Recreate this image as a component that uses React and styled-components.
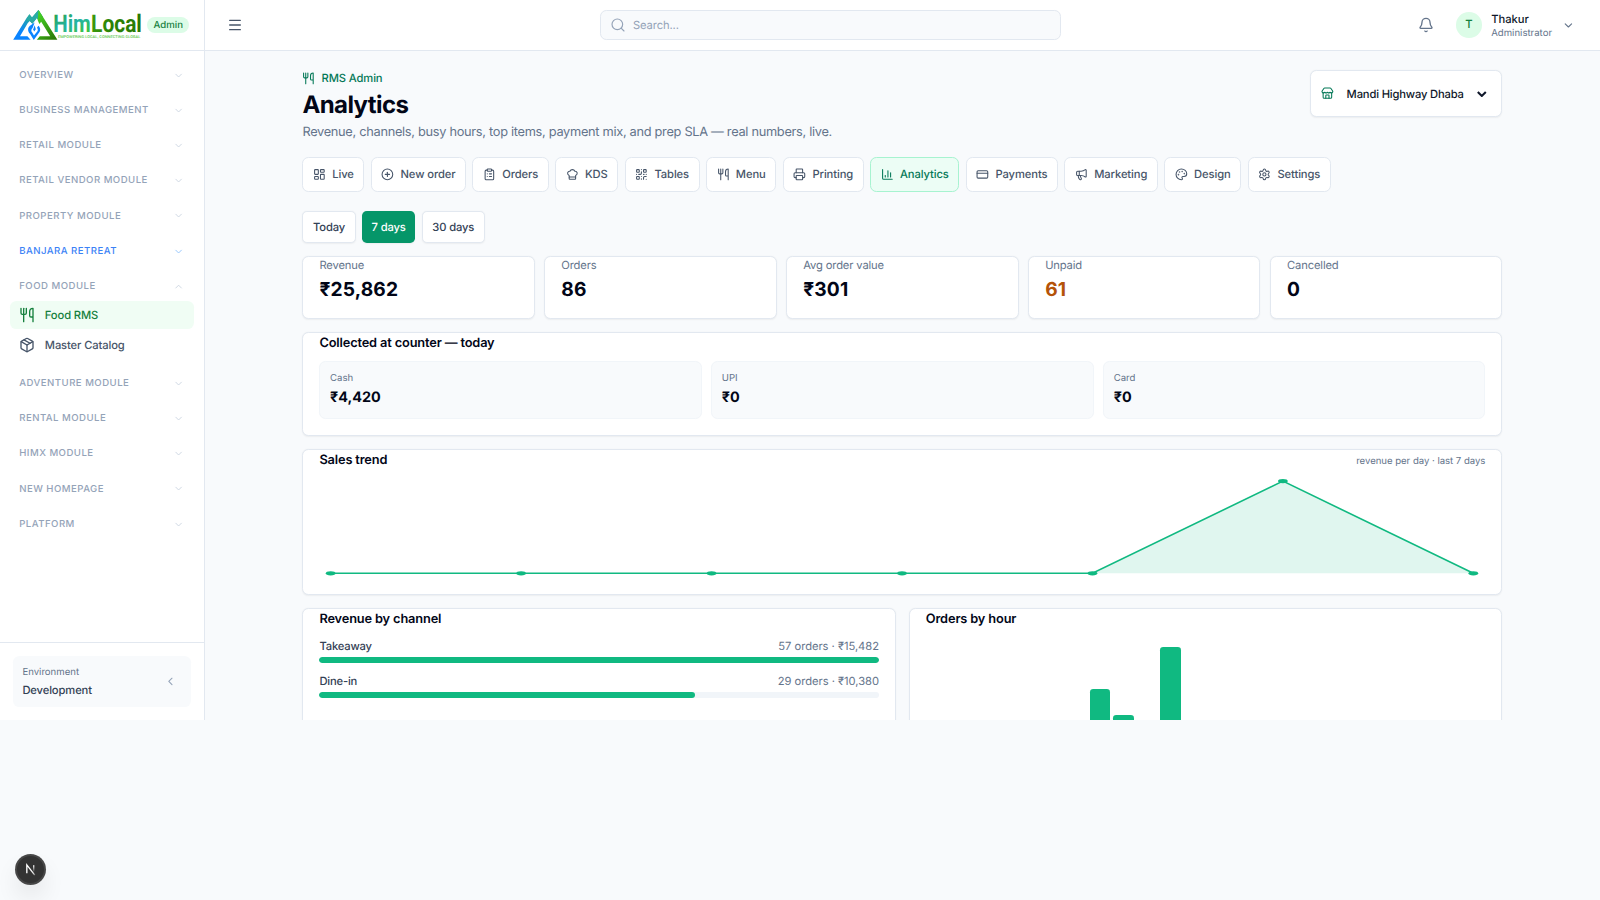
import React from "react";
import styled, { createGlobalStyle } from "styled-components";
import {
  Bell, ChartColumn, ChefHat, ChevronDown, ChevronLeft, ChevronUp, CirclePlus,
  ClipboardList, CreditCard, LayoutDashboard, Megaphone, Menu, Package, Palette,
  Printer, QrCode, Search, Settings, Store, Utensils,
} from "lucide-react";

const GlobalStyle = createGlobalStyle`
  *, *::before, *::after { box-sizing: border-box; }
  body {
    margin: 0;
    background: #f8fafc;
    color: #020617;
    font-family: Inter, "Noto Sans", sans-serif;
    font-size: 16px;
    line-height: 24px;
    text-rendering: geometricPrecision;
    overflow: hidden;
  }
  h1, h2, p { margin: 0; }
  button, input { font: inherit; color: inherit; text-rendering: inherit; }
  svg { display: block; flex-shrink: 0; }
`;

/* The admin shell is shown at 80% density. */
const Shell = styled.div`
  zoom: 0.8;
  display: flex;
  height: 900px;
  overflow: hidden;
`;

/* ---------- sidebar ---------- */
const Sidebar = styled.aside`
  width: 256px;
  flex-shrink: 0;
  display: flex;
  flex-direction: column;
  background: #fff;
  border-right: 1px solid #e2e8f0;
`;

const Brand = styled.div`
  height: 64px;
  flex-shrink: 0;
  display: flex;
  align-items: center;
  gap: 6px;
  padding: 0 16px;
  border-bottom: 1px solid #e2e8f0;
`;

const Badge = styled.span`
  padding: 3.25px 8px 0.75px;
  border-radius: 999px;
  background: #dcfce7;
  color: #15803d;
  font-size: 12px;
  line-height: 16px;
  font-weight: 500;
`;

const Nav = styled.nav`
  flex: 1;
  min-height: 0;
  padding: 14px 12px 0;
`;

const Section = styled.section`
  padding-bottom: 12px;
`;

const SectionHead = styled.div`
  display: flex;
  align-items: center;
  justify-content: space-between;
  height: 32px;
  padding: 0 12px;
  font-size: 12px;
  line-height: 16px;
  font-weight: 500;
  letter-spacing: 0.05em;
  color: ${(p) => (p.$accent ? "#3b82f6" : "#94a3b8")};
  svg { color: ${(p) => (p.$accent ? "#93c5fd" : "#cbd5e1")}; }
`;

const SectionName = styled.span`
  padding-top: 2.5px;
`;

const SectionItems = styled.div`
  display: flex;
  flex-direction: column;
  gap: 2px;
  padding: 2px 0 1.5px;
`;

const NavItem = styled.a`
  display: flex;
  align-items: center;
  gap: 12px;
  height: 36px;
  padding: 0 12px;
  border-radius: 8px;
  font-size: 14px;
  line-height: 20px;
  font-weight: 500;
  letter-spacing: -0.01em;
  background: ${(p) => (p.$active ? "#f0fdf4" : "transparent")};
  color: ${(p) => (p.$active ? "#15803d" : "#475569")};
`;

const SidebarFooter = styled.div`
  padding: 16px;
  border-top: 1px solid #e2e8f0;
`;

const EnvCard = styled.div`
  display: flex;
  align-items: center;
  justify-content: space-between;
  padding: 12px 18px 12px 12px;
  border-radius: 8px;
  background: #f8fafc;
  color: #94a3b8;
`;

const EnvText = styled.div`
  display: flex;
  flex-direction: column;
  gap: 4px;
`;

const EnvLabel = styled.span`
  margin: 1.25px 0 -1.25px;
  font-size: 12px;
  line-height: 16px;
  color: #64748b;
`;

const EnvName = styled.span`
  font-size: 14px;
  line-height: 20px;
  font-weight: 500;
  letter-spacing: -0.01em;
  color: #334155;
`;

/* ---------- header ---------- */
const Column = styled.div`
  flex: 1;
  min-width: 0;
  display: flex;
  flex-direction: column;
`;

const TopBar = styled.header`
  height: 64px;
  flex-shrink: 0;
  display: flex;
  align-items: center;
  padding: 0 24px 0 20px;
  background: #fff;
  border-bottom: 1px solid #e2e8f0;
`;

const IconButton = styled.button`
  display: flex;
  padding: 8px;
  border: 0;
  background: none;
  color: ${(p) => p.$tone};
`;

const SearchBox = styled.label`
  width: 576px;
  height: 38px;
  margin: 0 auto;
  display: flex;
  align-items: center;
  gap: 9px;
  padding: 0 12px 0 11px;
  border: 1px solid #e2e8f0;
  border-radius: 8px;
  background: #f8fafc;
  color: #94a3b8;
`;

const SearchInput = styled.input`
  flex: 1;
  padding: 0;
  border: 0;
  outline: 0;
  background: none;
  font-size: 14px;
  line-height: 20px;
  letter-spacing: -0.01em;
  &::placeholder { color: #94a3b8; opacity: 1; }
`;

const Account = styled.div`
  display: flex;
  align-items: center;
  gap: 12px;
  margin-left: 12px;
  padding: 0 8px;
  color: #64748b;
`;

const Avatar = styled.span`
  display: grid;
  place-items: center;
  width: 32px;
  height: 32px;
  border-radius: 50%;
  background: #dcfce7;
  color: #15803d;
  font-size: 14px;
  font-weight: 500;
`;

const AccountText = styled.div`
  display: flex;
  flex-direction: column;
`;

const AccountName = styled.span`
  font-size: 14px;
  line-height: 20px;
  font-weight: 500;
  color: #0f172a;
`;

const AccountRole = styled.span`
  margin: 1.25px 0 -1.25px;
  font-size: 12px;
  line-height: 16px;
  color: #64748b;
`;

/* ---------- page ---------- */
const Main = styled.main`
  flex: 1;
  min-height: 0;
  overflow: hidden;
  padding-top: 24px;
`;

const Page = styled.div`
  width: 1500px;
  margin: 0 auto;
  display: flex;
  flex-direction: column;
`;

const PageHead = styled.div`
  display: flex;
  align-items: flex-start;
  justify-content: space-between;
`;

const Eyebrow = styled.div`
  display: flex;
  align-items: center;
  gap: 8px;
  font-size: 14px;
  line-height: 20px;
  font-weight: 500;
  letter-spacing: -0.01em;
  color: #047857;
`;

const Title = styled.h1`
  margin-top: 5.25px;
  font-size: 30px;
  line-height: 36px;
  font-weight: 700;
  letter-spacing: -0.025em;
`;

const Subtitle = styled.p`
  margin-top: 4px;
  letter-spacing: -0.0235em;
  color: #64748b;
`;

const StorePicker = styled.div`
  display: flex;
  align-items: center;
  height: 58.5px;
  width: 240px;
  padding: 0 18px 0 12px;
  border: 1px solid #e2e8f0;
  border-radius: 8px;
  background: #fff;
  box-shadow: 0 1px 2px rgba(0, 0, 0, 0.05);
  color: #047857;
`;

const StoreName = styled.span`
  flex: 1;
  margin-left: 16px;
  font-size: 14px;
  line-height: 20px;
  font-weight: 500;
  letter-spacing: -0.014em;
  color: #0f172a;
  white-space: nowrap;
`;

const Tabs = styled.div`
  display: flex;
  gap: 8px;
  margin-top: 18.75px;
`;

const Tab = styled.a`
  display: flex;
  align-items: center;
  gap: 8px;
  height: 44px;
  padding: 0 12px;
  border: 1px solid ${(p) => (p.$active ? "#a7f3d0" : "#e2e8f0")};
  border-radius: 8px;
  background: ${(p) => (p.$active ? "#ecfdf5" : "#fff")};
  color: ${(p) => (p.$active ? "#047857" : "#475569")};
  font-size: 14px;
  line-height: 20px;
  font-weight: 500;
  letter-spacing: -0.0085em;
`;

const Periods = styled.div`
  display: flex;
  gap: 8px;
  margin: 24px 0 16px;
`;

const Period = styled.button`
  height: 40px;
  padding: 0 12px;
  border: ${(p) => (p.$active ? "0" : "1px solid #e2e8f0")};
  border-radius: 6px;
  background: ${(p) => (p.$active ? "#059669" : "#fff")};
  color: ${(p) => (p.$active ? "#fff" : "#334155")};
  box-shadow: 0 1px 2px rgba(0, 0, 0, 0.05);
  font-size: 14px;
  line-height: 20px;
  font-weight: 500;
  letter-spacing: -0.012em;
`;

const Stack = styled.div`
  display: flex;
  flex-direction: column;
  gap: 16px;
`;

const Grid = styled.div`
  display: grid;
  grid-template-columns: repeat(${(p) => p.$cols}, minmax(0, 1fr));
  gap: ${(p) => p.$gap}px;
`;

const Card = styled.section`
  padding: 0 20px 20px;
  border: 1px solid #e2e8f0;
  border-radius: 8px;
  background: #fff;
  box-shadow: 0 1px 2px rgba(0, 0, 0, 0.05);
`;

const CardHead = styled.div`
  display: flex;
  align-items: flex-start;
  justify-content: space-between;
`;

const CardTitle = styled.h2`
  padding-top: 1.25px;
  margin-bottom: -1.25px;
  font-size: 16px;
  line-height: 24px;
  font-weight: 600;
  letter-spacing: -0.0115em;
`;

const CardNote = styled.span`
  padding-top: 7.5px;
  font-size: 12px;
  line-height: 16px;
  letter-spacing: -0.003em;
  color: #64748b;
`;

const StatLabel = styled.p`
  font-size: 14px;
  line-height: 20px;
  letter-spacing: -0.0125em;
  color: #64748b;
`;

const StatValue = styled.p`
  margin: 5.25px 0 -1.25px;
  font-size: 24px;
  line-height: 32px;
  font-weight: 700;
  letter-spacing: 0.007em;
  color: ${(p) => (p.$warn ? "#b45309" : "#020617")};
`;

const CounterGrid = styled(Grid)`
  margin-top: 12px;
`;

const CounterTile = styled.div`
  padding: 12px;
  border: 1px solid #f1f5f9;
  border-radius: 8px;
  background: #f8fafc;
`;

const CounterLabel = styled.p`
  padding-top: 1.25px;
  font-size: 12px;
  line-height: 16px;
  color: #64748b;
`;

const CounterValue = styled.p`
  margin: 2px 0 -1.25px;
  font-size: 18px;
  line-height: 28px;
  font-weight: 700;
`;

const TrendChart = styled.svg`
  width: 100%;
  height: 128px;
  margin-top: 8px;
`;

const Channels = styled.div`
  display: flex;
  flex-direction: column;
  gap: 12px;
  margin-top: 12px;
  font-size: 14px;
  line-height: 20px;
`;

const ChannelHead = styled.div`
  display: flex;
  justify-content: space-between;
  margin-bottom: 4px;
  color: #64748b;
  letter-spacing: -0.003em;
`;

const ChannelName = styled.span`
  font-weight: 500;
  letter-spacing: -0.015em;
  color: #334155;
`;

const Track = styled.div`
  height: 8px;
  border-radius: 999px;
  background: #f1f5f9;
  overflow: hidden;
`;

const Fill = styled.div`
  height: 100%;
  border-radius: 999px;
  background: #10b981;
`;

const Hours = styled.div`
  display: flex;
  align-items: flex-end;
  gap: 4px;
  height: 140px;
  margin-top: 24px;
`;

const HourBar = styled.div`
  flex: 1;
  border-radius: 4px 4px 0 0;
  background: #10b981;
`;

const DevBadge = styled.div`
  position: fixed;
  left: 16px;
  bottom: 16px;
  width: 29px;
  height: 29px;
  border-radius: 50%;
  background: #333;
  box-shadow: 0 0 0 1px #4a4a4a, inset 0 0 0 1px rgba(255, 255, 255, 0.1),
    0 13px 26px -6px rgba(0, 0, 0, 0.24);
`;

/* ---------- drawings ---------- */
const LogoSvg = styled.svg`
  overflow: visible;
`;

function Logo() {
  return (
    <LogoSvg width="162" height="40" viewBox="0 0 129.6 32">
      <defs>
        <linearGradient id="peakLeft" x1="0" y1="1" x2="0.6" y2="0">
          <stop offset="0.3" stopColor="#0a84ff" />
          <stop offset="1" stopColor="#2cb67d" />
        </linearGradient>
        <linearGradient id="peakRight" x1="0" y1="0" x2="0.8" y2="1">
          <stop offset="0" stopColor="#4ade2a" />
          <stop offset="1" stopColor="#2a7a06" />
        </linearGradient>
        <linearGradient id="him" x1="0" y1="0" x2="0.6" y2="1">
          <stop offset="0" stopColor="#2f9e2f" />
          <stop offset="0.6" stopColor="#22b3a6" />
          <stop offset="1" stopColor="#3cc43c" />
        </linearGradient>
        <linearGradient id="local" x1="0" y1="0" x2="1" y2="0">
          <stop offset="0" stopColor="#3c9a10" />
          <stop offset="0.4" stopColor="#2a8204" />
          <stop offset="1" stopColor="#2a7a06" />
        </linearGradient>
      </defs>
      {/* left slope with the snowy peaks */}
      <path d="M0.2 30.8 L13.6 9 L16.4 5.2 L19 8.6 L25.4 1 L29.6 7.4 L26 11.8 L23.8 9 L19.4 14.8 L16.8 12 L14.8 14 L7 27.2 H14.4 L17.6 30.8 Z" fill="url(#peakLeft)" />
      <path d="M13.2 11.8 L16.4 5.2 L19 8.6 L25.4 1 L29.6 7.4 L26 11.8 L23.8 9 L19.4 14.8 L16.8 12 Z" fill="#29aba6" />
      {/* right slope */}
      <path d="M25.6 1 L44.4 30.8 H23.8 L26.8 27.2 H37.2 L28.2 12.8 L26.4 15 L24.6 11 Z" fill="url(#peakRight)" />
      {/* river drop */}
      <path d="M21.6 13.4 L16.6 17 C14.4 19.2 14.8 22.6 17 24.8 L20.8 31 L25.4 24.6 C28 22 27.6 18.8 25.4 16.8 L24 18.8 C25.4 20.4 25 22.4 23.2 23.8 L21 26.4 L19.2 23.6 C17.8 22 18.2 20.2 19.6 19 Z" fill="#0a84ff" />
      <path d="M21.6 16.2 L20.2 20.4 L21.2 22.4 L22.8 20.2 Z" fill="#0a84ff" />
      <text x="40.2" y="22.6" fontFamily="Roboto, sans-serif" fontWeight="700" fontSize="24.4" textLength="37.6" lengthAdjust="spacingAndGlyphs" fill="url(#him)">Him</text>
      <text x="78.1" y="22.6" fontFamily="Roboto, sans-serif" fontWeight="700" fontSize="24.4" textLength="50.8" lengthAdjust="spacingAndGlyphs" fill="url(#local)">Local</text>
      <text x="45" y="29" fontFamily="Roboto, sans-serif" fontWeight="500" fontSize="3.8" textLength="82.4" lengthAdjust="spacingAndGlyphs" fill="#5cc84a">EMPOWERING LOCAL, CONNECTING GLOBAL</text>
    </LogoSvg>
  );
}

function DevMark() {
  return (
    <svg width="29" height="29" viewBox="0 0 40 40" fill="none">
      <defs>
        <linearGradient id="markDiagonal" x1="7.8" y1="8" x2="13.6" y2="15.4" gradientUnits="userSpaceOnUse">
          <stop stopColor="#fff" />
          <stop offset="0.6" stopColor="#fff" stopOpacity="0.85" />
          <stop offset="1" stopColor="#fff" stopOpacity="0.3" />
        </linearGradient>
        <linearGradient id="markStem" x1="11.8" y1="1.5" x2="11.8" y2="11" gradientUnits="userSpaceOnUse">
          <stop stopColor="#fff" />
          <stop offset="1" stopColor="#fff" stopOpacity="0" />
        </linearGradient>
      </defs>
      <g transform="translate(12.6 12.6)" strokeWidth="1.86">
        <path d="M13.3 15.2 L2.34 1 V12.6" stroke="url(#markDiagonal)" />
        <path d="M11.825 1.5 V13.1" stroke="url(#markStem)" />
      </g>
    </svg>
  );
}

/* ---------- data ---------- */
const sections = [
  { name: "OVERVIEW" },
  { name: "BUSINESS MANAGEMENT" },
  { name: "RETAIL MODULE" },
  { name: "RETAIL VENDOR MODULE" },
  { name: "PROPERTY MODULE" },
  { name: "BANJARA RETREAT", accent: true },
  {
    name: "FOOD MODULE",
    items: [
      { name: "Food RMS", icon: Utensils, active: true },
      { name: "Master Catalog", icon: Package },
    ],
  },
  { name: "ADVENTURE MODULE" },
  { name: "RENTAL MODULE" },
  { name: "HIMX MODULE" },
  { name: "NEW HOMEPAGE" },
  { name: "PLATFORM" },
];

const tabs = [
  ["Live", LayoutDashboard],
  ["New order", CirclePlus],
  ["Orders", ClipboardList],
  ["KDS", ChefHat],
  ["Tables", QrCode],
  ["Menu", Utensils],
  ["Printing", Printer],
  ["Analytics", ChartColumn],
  ["Payments", CreditCard],
  ["Marketing", Megaphone],
  ["Design", Palette],
  ["Settings", Settings],
];

const stats = [
  ["Revenue", "₹25,862"],
  ["Orders", "86"],
  ["Avg order value", "₹301"],
  ["Unpaid", "61", true],
  ["Cancelled", "0"],
];

const counter = [["Cash", "₹4,420"], ["UPI", "₹0"], ["Card", "₹0"]];

const channels = [
  ["Takeaway", "57 orders · ₹15,482", 100],
  ["Dine-in", "29 orders · ₹10,380", 67.05],
];

const trend = [0, 0, 0, 0, 0, 1, 0].map((v, i) => [6 + i * 98, 114 - v * 108]);
const trendLine = trend.map((p) => p.join(",")).join(" ");

const hours = Array(24).fill(0);
hours[7] = 62.5;
hours[8] = 39.3;
hours[10] = 100;

export default function App() {
  return (
    <>
      <GlobalStyle />
      <Shell>
        <Sidebar>
          <Brand>
            <Logo />
            <Badge>Admin</Badge>
          </Brand>
          <Nav>
            {sections.map(({ name, accent, items }) => (
              <Section key={name}>
                <SectionHead $accent={accent}>
                  <SectionName>{name}</SectionName>
                  {items ? <ChevronUp size={14} /> : <ChevronDown size={14} />}
                </SectionHead>
                {items && (
                  <SectionItems>
                    {items.map(({ name: label, icon: Icon, active }) => (
                      <NavItem key={label} $active={active}>
                        <Icon size={20} />
                        {label}
                      </NavItem>
                    ))}
                  </SectionItems>
                )}
              </Section>
            ))}
          </Nav>
          <SidebarFooter>
            <EnvCard>
              <EnvText>
                <EnvLabel>Environment</EnvLabel>
                <EnvName>Development</EnvName>
              </EnvText>
              <ChevronLeft size={16} />
            </EnvCard>
          </SidebarFooter>
        </Sidebar>

        <Column>
          <TopBar>
            <IconButton $tone="#475569" aria-label="Menu"><Menu size={20} /></IconButton>
            <SearchBox>
              <Search size={20} strokeWidth={1.75} />
              <SearchInput placeholder="Search..." />
            </SearchBox>
            <IconButton $tone="#64748b" aria-label="Notifications"><Bell size={20} /></IconButton>
            <Account>
              <Avatar>T</Avatar>
              <AccountText>
                <AccountName>Thakur</AccountName>
                <AccountRole>Administrator</AccountRole>
              </AccountText>
              <ChevronDown size={16} />
            </Account>
          </TopBar>

          <Main>
            <Page>
              <PageHead>
                <div>
                  <Eyebrow><Utensils size={16} />RMS Admin</Eyebrow>
                  <Title>Analytics</Title>
                  <Subtitle>Revenue, channels, busy hours, top items, payment mix, and prep SLA — real numbers, live.</Subtitle>
                </div>
                <StorePicker>
                  <Store size={16} />
                  <StoreName>Mandi Highway Dhaba</StoreName>
                  <svg width="12" height="8" viewBox="0 0 12 8" fill="none" stroke="#0f172a" strokeWidth="2.6">
                    <path d="M1 1.2 L6 6.2 L11 1.2" />
                  </svg>
                </StorePicker>
              </PageHead>

              <Tabs>
                {tabs.map(([name, Icon]) => (
                  <Tab key={name} $active={name === "Analytics"}>
                    <Icon size={16} />
                    {name}
                  </Tab>
                ))}
              </Tabs>

              <Periods>
                <Period>Today</Period>
                <Period $active>7 days</Period>
                <Period>30 days</Period>
              </Periods>

              <Stack>
                <Grid $cols={5} $gap={12}>
                  {stats.map(([label, value, warn]) => (
                    <Card key={label}>
                      <StatLabel>{label}</StatLabel>
                      <StatValue $warn={warn}>{value}</StatValue>
                    </Card>
                  ))}
                </Grid>

                <Card>
                  <CardTitle>Collected at counter — today</CardTitle>
                  <CounterGrid $cols={3} $gap={12}>
                    {counter.map(([label, value]) => (
                      <CounterTile key={label}>
                        <CounterLabel>{label}</CounterLabel>
                        <CounterValue>{value}</CounterValue>
                      </CounterTile>
                    ))}
                  </CounterGrid>
                </Card>

                <Card>
                  <CardHead>
                    <CardTitle>Sales trend</CardTitle>
                    <CardNote>revenue per day · last 7 days</CardNote>
                  </CardHead>
                  <TrendChart viewBox="0 0 600 120" preserveAspectRatio="none">
                    <polygon points={`6,114 ${trendLine} 594,114`} fill="#10b981" fillOpacity="0.13" />
                    <polyline points={trendLine} fill="none" stroke="#10b981" strokeWidth="2" vectorEffect="non-scaling-stroke" />
                    {trend.map(([x, y]) => <circle key={x} cx={x} cy={y} r="2.5" fill="#10b981" />)}
                  </TrendChart>
                </Card>

                <Grid $cols={2} $gap={16}>
                  <Card>
                    <CardTitle>Revenue by channel</CardTitle>
                    <Channels>
                      {channels.map(([name, detail, share]) => (
                        <div key={name}>
                          <ChannelHead>
                            <ChannelName>{name}</ChannelName>
                            <span>{detail}</span>
                          </ChannelHead>
                          <Track><Fill style={{ width: `${share}%` }} /></Track>
                        </div>
                      ))}
                    </Channels>
                  </Card>
                  <Card>
                    <CardTitle>Orders by hour</CardTitle>
                    <Hours>
                      {hours.map((share, hour) => <HourBar key={hour} style={{ height: `${share}%` }} />)}
                    </Hours>
                  </Card>
                </Grid>
              </Stack>
            </Page>
          </Main>
        </Column>
      </Shell>
      <DevBadge><DevMark /></DevBadge>
    </>
  );
}
